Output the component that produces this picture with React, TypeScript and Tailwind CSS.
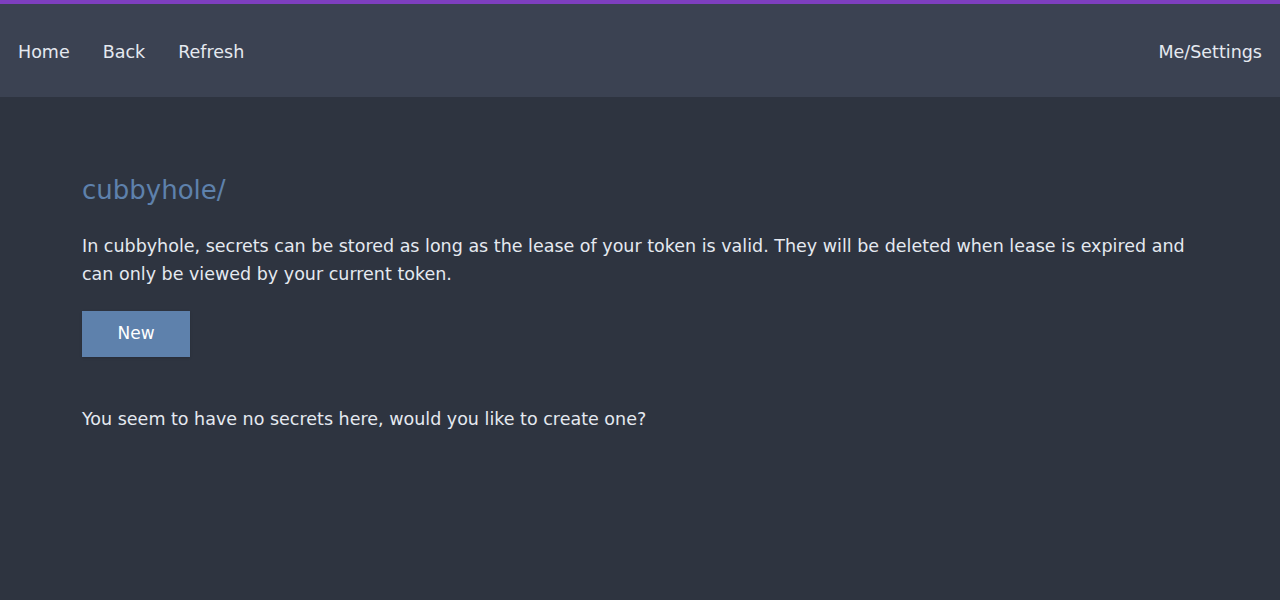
export default function App() {
  const font = { fontFamily: '"Comic Sans MS", "DejaVu Sans", sans-serif' }
  return (
    <div className="min-h-[600px] bg-[#2e3440] text-[#e5e9f0]" style={font}>
      <div className="h-[4px] bg-[#7e3fbf]"></div>
      <nav className="h-[93px] bg-[#3b4252] flex items-center justify-between px-[18px] pt-[3px] text-[17.5px]">
        <div className="flex gap-[33px]">
          <span>Home</span>
          <span>Back</span>
          <span>Refresh</span>
        </div>
        <span>Me/Settings</span>
      </nav>

      <main className="px-[82px] pt-[77px]">
        <h1 className="text-[26px] text-[#5e81ac] leading-[32px]">cubbyhole/</h1>
        <p className="mt-[26px] text-[17.5px] leading-[28px] max-w-[1116px]">
          In cubbyhole, secrets can be stored as long as the lease of your token is valid. They will be deleted when lease is expired and can only be viewed by your current token.
        </p>
        <button className="mt-[23px] w-[108px] h-[46px] bg-[#5e81ac] text-[17px] text-white shadow-sm">
          New
        </button>
        <p className="mt-[48px] text-[17.5px] leading-[28px]">
          You seem to have no secrets here, would you like to create one?
        </p>
      </main>
    </div>
  )
}
